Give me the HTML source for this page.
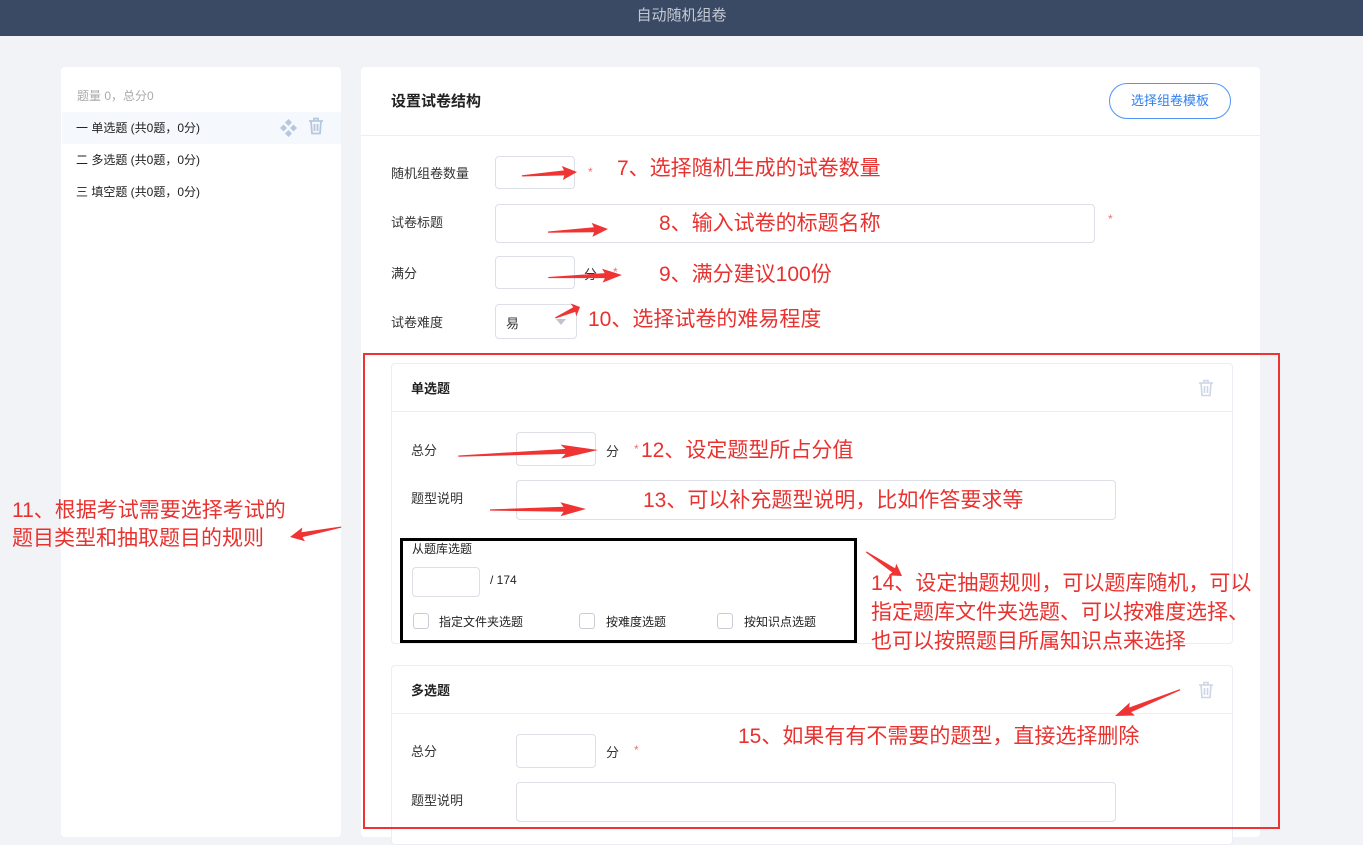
<!DOCTYPE html>
<html><head><meta charset="utf-8"><style>
*{margin:0;padding:0;box-sizing:border-box}
body{width:1363px;height:832px;overflow:hidden;background:#f2f3f7;font-family:"Liberation Sans","Noto Sans CJK SC",sans-serif;color:#333;position:relative}
.a{position:absolute}
.hd{left:0;top:0;width:1363px;height:36px;background:#3b4a64;color:#c3c9d3;font-size:15px;text-align:center;line-height:32px}
.pn{background:#fff;border-radius:4px}
.t13{font-size:13px;color:#333}
.t12{font-size:12px;color:#222}
.in{border:1px solid #dcdfe6;border-radius:4px;background:#fff}
.r{color:#e8322f;font-size:21px;white-space:nowrap}
.st{color:#f56c6c;font-size:12px}
.cb{width:16px;height:16px;border:1px solid #c8ccd4;border-radius:3px;background:#fff}
.card{border:1px solid #ebeef5;border-radius:4px;background:#fff}
</style></head><body>
<div class="a hd">自动随机组卷</div>
<div class="a pn" style="left:61px;top:67px;width:280px;height:770px"></div>
<div class="a" style="left:77px;top:87px;font-size:12px;color:#aaa">题量 0，总分0</div>
<div class="a" style="left:62px;top:112px;width:279px;height:32px;background:#f5f8fc"></div>
<div class="a t12" style="left:76px;top:119px">一 单选题 (共0题，0分)</div>
<div class="a t12" style="left:76px;top:151px">二 多选题 (共0题，0分)</div>
<div class="a t12" style="left:76px;top:183px">三 填空题 (共0题，0分)</div>
<svg class="a" style="left:280px;top:119px" width="18" height="18" viewBox="0 0 18 18" fill="#b7c7e0"><rect x="6" y="1" width="5" height="5" transform="rotate(45 8.5 3.5)"/><rect x="6" y="12" width="5" height="5" transform="rotate(45 8.5 14.5)"/><rect x="1" y="6.5" width="5" height="5" transform="rotate(45 3.5 9)"/><rect x="11" y="6.5" width="5" height="5" transform="rotate(45 13.5 9)"/></svg>
<svg class="a" style="left:308px;top:117px" width="16" height="18" viewBox="0 0 16 18" fill="none" stroke="#b7c7e0" stroke-width="1.8"><path d="M1 4h14M6 4V1.5h4V4M3 4l1 12.5h8L13 4M6.5 7v7M9.5 7v7"/></svg>

<div class="a pn" style="left:361px;top:67px;width:899px;height:770px"></div>
<div class="a" style="left:391px;top:90px;font-size:15px;font-weight:bold;color:#222">设置试卷结构</div>
<div class="a" style="left:1109px;top:83px;width:122px;height:36px;border:1px solid #4f94f6;border-radius:18px;color:#2f7ff0;font-size:13px;text-align:center;line-height:34px">选择组卷模板</div>
<div class="a" style="left:361px;top:135px;width:899px;height:1px;background:#eee"></div>

<div class="a t13" style="left:391px;top:163px">随机组卷数量</div>
<div class="a in" style="left:495px;top:156px;width:80px;height:33px"></div>
<div class="a st" style="left:588px;top:165px">*</div>
<div class="a t13" style="left:391px;top:212px">试卷标题</div>
<div class="a in" style="left:495px;top:204px;width:600px;height:39px"></div>
<div class="a st" style="left:1108px;top:212px">*</div>
<div class="a t13" style="left:391px;top:263px">满分</div>
<div class="a in" style="left:495px;top:256px;width:80px;height:33px"></div>
<div class="a t13" style="left:584px;top:264px">分</div>
<div class="a st" style="left:613px;top:265px">*</div>
<div class="a t13" style="left:391px;top:312px">试卷难度</div>
<div class="a in" style="left:495px;top:304px;width:82px;height:35px"></div>
<div class="a t13" style="left:506px;top:313px">易</div>
<div class="a" style="left:556px;top:319px;border:5px solid transparent;border-top:6px solid #c0c4cc"></div>

<div class="a card" style="left:391px;top:363px;width:842px;height:281px"></div>
<div class="a" style="left:411px;top:378px;font-size:13px;font-weight:bold;color:#222">单选题</div>
<div class="a" style="left:392px;top:411px;width:840px;height:1px;background:#eee"></div>
<svg class="a" style="left:1198px;top:379px" width="16" height="18" viewBox="0 0 16 18" fill="none" stroke="#ccd6e6" stroke-width="1.6"><path d="M1 4h14M6 4V1.5h4V4M3 4l1 12.5h8L13 4M6.5 7v7M9.5 7v7"/></svg>
<div class="a t13" style="left:411px;top:440px">总分</div>
<div class="a in" style="left:516px;top:432px;width:80px;height:34px"></div>
<div class="a t13" style="left:606px;top:441px">分</div>
<div class="a st" style="left:634px;top:442px">*</div>
<div class="a t13" style="left:411px;top:488px">题型说明</div>
<div class="a in" style="left:516px;top:480px;width:600px;height:40px"></div>
<div class="a t12" style="left:412px;top:540px">从题库选题</div>
<div class="a in" style="left:412px;top:567px;width:68px;height:30px"></div>
<div class="a t12" style="left:490px;top:573px">/ 174</div>
<div class="a cb" style="left:413px;top:613px"></div><div class="a t12" style="left:439px;top:613px">指定文件夹选题</div>
<div class="a cb" style="left:579px;top:613px"></div><div class="a t12" style="left:606px;top:613px">按难度选题</div>
<div class="a cb" style="left:717px;top:613px"></div><div class="a t12" style="left:744px;top:613px">按知识点选题</div>
<div class="a" style="left:400px;top:538px;width:457px;height:105px;border:3px solid #000"></div>

<div class="a card" style="left:391px;top:665px;width:842px;height:180px"></div>
<div class="a" style="left:411px;top:680px;font-size:13px;font-weight:bold;color:#222">多选题</div>
<div class="a" style="left:392px;top:713px;width:840px;height:1px;background:#eee"></div>
<svg class="a" style="left:1198px;top:681px" width="16" height="18" viewBox="0 0 16 18" fill="none" stroke="#ccd6e6" stroke-width="1.6"><path d="M1 4h14M6 4V1.5h4V4M3 4l1 12.5h8L13 4M6.5 7v7M9.5 7v7"/></svg>
<div class="a t13" style="left:411px;top:741px">总分</div>
<div class="a in" style="left:516px;top:734px;width:80px;height:34px"></div>
<div class="a t13" style="left:606px;top:742px">分</div>
<div class="a st" style="left:634px;top:743px">*</div>
<div class="a t13" style="left:411px;top:790px">题型说明</div>
<div class="a in" style="left:516px;top:782px;width:600px;height:40px"></div>

<div class="a" style="left:363px;top:353px;width:917px;height:476px;border:2px solid #ee3333"></div>

<div class="a r" style="left:617px;top:152px">7、选择随机生成的试卷数量</div>
<div class="a r" style="left:659px;top:207px">8、输入试卷的标题名称</div>
<div class="a r" style="left:659px;top:258px">9、满分建议100份</div>
<div class="a r" style="left:588px;top:303px">10、选择试卷的难易程度</div>
<div class="a r" style="left:641px;top:434px">12、设定题型所占分值</div>
<div class="a r" style="left:643px;top:484px">13、可以补充题型说明，比如作答要求等</div>
<div class="a r" style="left:12px;top:497px;line-height:28px">11、根据考试需要选择考试的<br>题目类型和抽取题目的规则</div>
<div class="a r" style="left:871px;top:569px;line-height:29px">14、设定抽题规则，可以题库随机，可以<br>指定题库文件夹选题、可以按难度选择、<br>也可以按照题目所属知识点来选择</div>
<div class="a r" style="left:738px;top:720px">15、如果有有不需要的题型，直接选择删除</div>

<svg class="a" style="left:0;top:0" width="1363" height="832" fill="#f03434">
<defs><polygon id="ah" points="0,0 -16,-7 -14,-2.5 -60,-0.6 -60,0.6 -14,2.5 -16,7"/></defs>
<g transform="translate(577,172) rotate(-4) scale(0.92,1)"><use href="#ah"/></g>
<g transform="translate(608,229) rotate(-3)"><use href="#ah"/></g>
<g transform="translate(622,275) rotate(-2) scale(1.23,1)"><use href="#ah"/></g>
<g transform="translate(580,307) rotate(-24) scale(0.45,1)"><use href="#ah"/></g>
<g transform="translate(598,450) rotate(-2.5) scale(2.33,1)"><use href="#ah"/></g>
<g transform="translate(586,509) rotate(-0.6) scale(1.6,1)"><use href="#ah"/></g>
<g transform="translate(290,537) rotate(169) scale(0.87,1)"><use href="#ah"/></g>
<g transform="translate(902,576) rotate(34) scale(0.72,1)"><use href="#ah"/></g>
<g transform="translate(1115,716) rotate(158) scale(1.17,1)"><use href="#ah"/></g>
</svg>
</body></html>
